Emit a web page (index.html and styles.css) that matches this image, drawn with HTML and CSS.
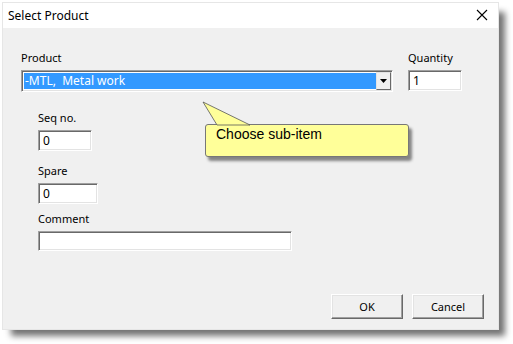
FILE: index.html
```html
<!DOCTYPE html>
<html lang="en">
<head>
    <meta charset="UTF-8">
    <meta name="viewport" content="width=device-width, initial-scale=1.0">
    <title>Select Product</title>
    <link rel="stylesheet" href="styles.css">
</head>
<body>
    <div class="dialog">
        <div class="titlebar">
            <span class="title">Select Product</span>
            <svg class="close" width="12" height="12" viewBox="0 0 12 12">
                <path d="M1 1 L11 11 M11 1 L1 11" stroke="#000" stroke-width="1.1" fill="none"/>
            </svg>
        </div>
        <div class="content">
            <div class="top-row">
                <div class="field">
                    <label>Product</label>
                    <div class="combo">
                        <div class="combo-value">-MTL,&nbsp; Metal work</div>
                        <div class="combo-button">
                            <svg width="7" height="4" viewBox="0 0 7 4"><path d="M0 0 H7 L3.5 4 Z" fill="#000"/></svg>
                        </div>
                    </div>
                </div>
                <div class="field">
                    <label>Quantity</label>
                    <div class="edit qty">1</div>
                </div>
            </div>

            <div class="sub-fields">
                <div class="field">
                    <label>Seq no.</label>
                    <div class="edit seq">0</div>
                </div>
                <div class="field">
                    <label>Spare</label>
                    <div class="edit spare">0</div>
                </div>
                <div class="field">
                    <label>Comment</label>
                    <div class="edit comment"></div>
                </div>
            </div>

            <div class="buttons">
                <button>OK</button>
                <button>Cancel</button>
            </div>

            <div class="balloon">
                <svg class="balloon-tail" width="50" height="26" viewBox="0 0 50 26">
                    <path d="M1 1 L48 24 L15 24 Z" fill="#ffff99" stroke="#555" stroke-width="0.8"/>
                </svg>
                <div class="balloon-body">Choose sub-item</div>
            </div>
        </div>
    </div>
</body>
</html>
```

FILE: styles.css
```css
body {
    margin: 0;
    padding: 3px 0 0 3px;
    min-height: 344px;
    box-sizing: border-box;
    background-color: #ffffff;
    font-family: 'Noto Sans', 'Open Sans', sans-serif;
    font-size: 11px;
    color: #000;
}
.dialog {
    position: relative;
    width: 495px;
    height: 326px;
    background-color: #f0f0f0;
    outline: 1px solid #e6e6e6;
    display: flex;
    flex-direction: column;
}
.dialog::after {
    content: '';
    position: absolute;
    left: 8px;
    top: 9px;
    right: -7px;
    bottom: -7px;
    background-color: rgba(0, 0, 0, 0.55);
    filter: blur(3px);
    z-index: -1;
}
.titlebar {
    height: 25px;
    background-color: #ffffff;
    display: flex;
    align-items: center;
    justify-content: space-between;
    padding: 0 10px 0 5px;
}
.title {
    font-size: 12px;
    margin-top: -1px;
}
.close {
    margin-top: -1px;
}
.content {
    flex: 1;
    position: relative;
    padding: 22px 14px 10px 18px;
    display: flex;
    flex-direction: column;
}
.field label {
    display: block;
    line-height: 16px;
    height: 20px;
}
.top-row {
    display: flex;
    gap: 15px;
}
.combo {
    width: 372px;
    height: 22px;
    box-sizing: border-box;
    display: flex;
    border: 1px solid;
    border-color: #a0a0a0 #ffffff #ffffff #a0a0a0;
    box-shadow: inset 1px 1px #696969, inset -1px -1px #e3e3e3;
    padding: 2px;
    background-color: #fff;
}
.combo-value {
    flex: 1;
    background-color: #3399ff;
    color: #fff;
    font-size: 12px;
    line-height: 16px;
    padding-left: 1px;
}
.combo-button {
    width: 15px;
    margin: -1px -1px -1px 0;
    box-sizing: border-box;
    background-color: #f0f0f0;
    border: 1px solid;
    border-color: #e3e3e3 #696969 #696969 #e3e3e3;
    display: flex;
    align-items: center;
    justify-content: center;
}
.edit {
    height: 21px;
    box-sizing: border-box;
    background-color: #fff;
    border: 1px solid;
    border-color: #a0a0a0 #ffffff #ffffff #a0a0a0;
    box-shadow: inset 1px 1px #696969, inset -1px -1px #e3e3e3;
    padding: 2px 4px;
    font-size: 12px;
    line-height: 16px;
}
.qty { width: 54px; }
.seq { width: 54px; }
.spare { width: 60px; }
.comment { width: 254px; height: 20px; }
.sub-fields {
    padding-left: 17px;
    margin-top: 18px;
}
.sub-fields .field:nth-child(2) { margin-top: 12px; }
.sub-fields .field:nth-child(3) { margin-top: 7px; }
.buttons {
    margin-top: auto;
    display: flex;
    justify-content: flex-end;
    gap: 9px;
}
button {
    width: 72px;
    height: 25px;
    font-family: 'Noto Sans', 'Open Sans', sans-serif;
    font-size: 11px;
    background-color: #f0f0f0;
    border: 1px solid;
    border-color: #ffffff #696969 #696969 #ffffff;
    box-shadow: inset -1px -1px #a0a0a0, inset 1px 1px #e3e3e3;
    padding: 0;
}
.balloon {
    position: absolute;
    left: 199px;
    top: 73px;
}
.balloon-tail {
    display: block;
    margin-bottom: -3px;
    position: relative;
    z-index: 1;
}
.balloon-body {
    width: 204px;
    height: 33px;
    box-sizing: border-box;
    margin-left: 3px;
    background-color: #ffff99;
    border: 1px solid #777;
    border-radius: 3px;
    box-shadow: 3px 4px 3px rgba(0, 0, 0, 0.45);
    font-family: 'Liberation Sans', Arial, sans-serif;
    font-size: 14px;
    padding: 1px 0 0 10px;
}
```
